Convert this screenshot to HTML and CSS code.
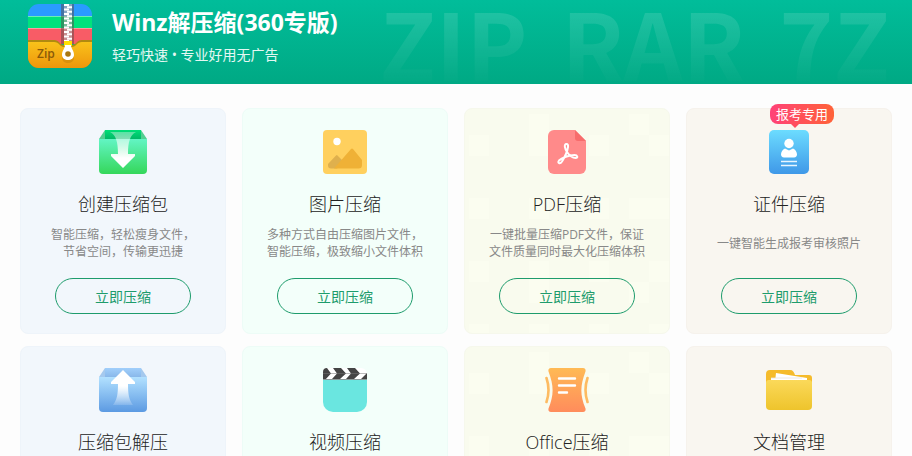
FILE: index.html
```html
<!DOCTYPE html>
<html lang="zh-CN">

<head>
    <meta charset="UTF-8">
    <meta name="viewport" content="width=device-width, initial-scale=1.0">
    <title>Winz解压缩(360专版)</title>
    <link rel="stylesheet" href="styles.css">
</head>

<body>
    <header class="banner">
        <svg class="logo" viewBox="0 0 64 64" aria-hidden="true">
            <defs>
                <linearGradient id="pocket" x1="0" y1="0" x2="0" y2="1">
                    <stop offset="0" stop-color="#f9c21a" />
                    <stop offset="1" stop-color="#ee960c" />
                </linearGradient>
                <clipPath id="logo-clip">
                    <rect width="64" height="64" rx="11" />
                </clipPath>
            </defs>
            <g clip-path="url(#logo-clip)">
                <rect width="64" height="12" fill="#2a9bff" />
                <rect y="12" width="64" height="12" fill="#00e27c" />
                <rect y="12" width="64" height="1" fill="#6aefb4" />
                <rect y="24" width="64" height="16" fill="#f85c66" />
                <rect y="24" width="64" height="1" fill="#ff9aa0" />
                <rect x="33" width="13" height="40" fill="#5a4a48" opacity=".5" />
                <path d="M0 36h26c5 0 6 5 10 5h8c4 0 5-5 10-5h10v28H0z" fill="#b08a10" />
                <path d="M0 38h26c5 0 6 5 10 5h8c4 0 5-5 10-5h10v26H0z" fill="url(#pocket)" />
                <path d="M40 0v38" stroke="#fff" stroke-width="8" stroke-opacity=".35" />
                <path d="M38.500 0v38" stroke="#fff" stroke-width="5" stroke-dasharray="2 2.500" />
                <path d="M41.500 2.200v36" stroke="#fff" stroke-width="5" stroke-dasharray="2 2.500" />
                <rect x="36" y="37" width="8" height="5" fill="#ffe000" />
                <path d="M37 42h6c0 4 3 5 3 10 0 3-3 5-6 5s-6-2-6-5c0-5 3-6 3-10z" fill="#a76b05" opacity=".3" transform="translate(0 2)" />
                <path d="M37 41h6c0 4 3 5 3 10 0 3-3 5-6 5s-6-2-6-5c0-5 3-6 3-10z" fill="#fff" />
                <circle cx="40" cy="50" r="2.800" fill="#a97712" />
            </g>
            <text class="logo-text" x="9" y="54">Zip</text>
        </svg>
        <div class="banner-text">
            <h1 class="app-name">Winz解压缩(360专版)</h1>
            <p class="slogan">轻巧快速 • 专业好用无广告</p>
        </div>
        <div class="formats" aria-hidden="true">
            <span>ZIP</span>
            <span>RAR</span>
            <span>7Z</span>
        </div>
    </header>

    <main class="tools">
        <section class="card card-blue">
            <svg class="icon" width="48" height="44" viewBox="0 0 48 44" aria-hidden="true">
                <defs>
                    <linearGradient id="box-green" x1="0" y1="0" x2="0" y2="1">
                        <stop offset="0" stop-color="#62f5c4" />
                        <stop offset="1" stop-color="#35d75a" />
                    </linearGradient>
                    <linearGradient id="lid-green" x1="0" y1="0" x2="0" y2="1">
                        <stop offset="0" stop-color="#00df78" />
                        <stop offset="1" stop-color="#00b464" />
                    </linearGradient>
                    <linearGradient id="arrow-down" gradientUnits="userSpaceOnUse" x1="0" y1="2" x2="0" y2="28">
                        <stop offset="0" stop-color="#fff" stop-opacity=".35" />
                        <stop offset="1" stop-color="#fff" />
                    </linearGradient>
                </defs>
                <path d="M6 0h36v10H6z" fill="url(#lid-green)" />
                <path d="M6 0v9H0zM42 0v9h6z" fill="#51cf91" />
                <path d="M0 9h48v31a4 4 0 0 1-4 4H4a4 4 0 0 1-4-4z" fill="url(#box-green)" />
                <path d="M11 2h26c-6 3-8 10-8 22h7v2L24 38 12 26v-2h7c0-12-2-19-8-22z" fill="url(#arrow-down)" />
            </svg>
            <h2 class="name">创建压缩包</h2>
            <p class="desc">智能压缩，轻松瘦身文件，<br>节省空间，传输更迅捷</p>
            <button type="button" class="start">立即压缩</button>
        </section>

        <section class="card card-mint">
            <svg class="icon" width="44" height="44" viewBox="0 0 44 44" aria-hidden="true">
                <rect width="44" height="44" rx="4" fill="#ffd05e" />
                <circle cx="14" cy="11.500" r="3.700" fill="#fff" />
                <path d="M5 34l8-8.500a1 1 0 0 1 1.500 0L22 33l-8 5.500H8a3 3 0 0 1-3-3z" fill="#dfb04d" />
                <path d="M11 38.500l17-19.500a1.300 1.300 0 0 1 2 0l9 11v5a3.500 3.500 0 0 1-3.500 3.500z" fill="#efb136" />
            </svg>
            <h2 class="name">图片压缩</h2>
            <p class="desc">多种方式自由压缩图片文件，<br>智能压缩，极致缩小文件体积</p>
            <button type="button" class="start">立即压缩</button>
        </section>

        <section class="card card-lime">
            <svg class="icon" width="38" height="44" viewBox="0 0 38 44" aria-hidden="true">
                <path d="M6 0h21l11 11v27a6 6 0 0 1-6 6H6a6 6 0 0 1-6-6V6a6 6 0 0 1 6-6z" fill="#ff8a8a" />
                <path d="M27 0l11 11h-8a3 3 0 0 1-3-3z" fill="#f76c6c" />
                <path d="M18.500 14c-3 0-1.500 5 .5 8s5.500 6 8.500 6 2-3-1-3c-5 0-13 3-15.500 5.500-2 2.500 1 4 3 1 2.500-4 5.500-11 6-14.500.3-2-.3-3-1.500-3z" fill="none" stroke="#fff" stroke-width="2" stroke-linejoin="round" />
            </svg>
            <h2 class="name">PDF压缩</h2>
            <p class="desc">一键批量压缩PDF文件，保证<br>文件质量同时最大化压缩体积</p>
            <button type="button" class="start">立即压缩</button>
        </section>

        <section class="card card-sand">
            <span class="badge">报考专用</span>
            <svg class="icon" width="40" height="44" viewBox="0 0 40 44" aria-hidden="true">
                <defs>
                    <linearGradient id="id-card" x1="0" y1="0" x2="0" y2="1">
                        <stop offset="0" stop-color="#6cdcff" />
                        <stop offset="1" stop-color="#3f98e8" />
                    </linearGradient>
                </defs>
                <rect width="40" height="44" rx="5" fill="url(#id-card)" />
                <circle cx="20" cy="13.500" r="4.700" fill="#fff" />
                <path d="M16 18.500l4 2 4-2c2.500 1 4 3.500 4 6 0 1.500-1 3-3 3H15c-2 0-3-1.500-3-3 0-2.500 1.500-5 4-6z" fill="#fff" />
                <path d="M12 31.500h16M12 35.500h16" stroke="#e8f6ff" stroke-width="1.300" />
            </svg>
            <h2 class="name">证件压缩</h2>
            <p class="desc">一键智能生成报考审核照片</p>
            <button type="button" class="start">立即压缩</button>
        </section>

        <section class="card card-blue">
            <svg class="icon" width="48" height="44" viewBox="0 0 48 44" aria-hidden="true">
                <defs>
                    <linearGradient id="box-blue" x1="0" y1="0" x2="0" y2="1">
                        <stop offset="0" stop-color="#b2e1ff" />
                        <stop offset="1" stop-color="#5c9ae2" />
                    </linearGradient>
                    <linearGradient id="lid-blue" x1="0" y1="0" x2="0" y2="1">
                        <stop offset="0" stop-color="#a1cffb" />
                        <stop offset="1" stop-color="#86b5e8" />
                    </linearGradient>
                    <linearGradient id="arrow-up" gradientUnits="userSpaceOnUse" x1="0" y1="18" x2="0" y2="37">
                        <stop offset="0" stop-color="#fff" />
                        <stop offset="1" stop-color="#fff" stop-opacity=".15" />
                    </linearGradient>
                </defs>
                <path d="M6 0h36v10H6z" fill="url(#lid-blue)" />
                <path d="M6 0v9H0zM42 0v9h6z" fill="#a5c9ee" />
                <path d="M0 9h48v31a4 4 0 0 1-4 4H4a4 4 0 0 1-4-4z" fill="url(#box-blue)" />
                <path d="M24 2l12 12v2h-7c0 10 1 16 5 21H14c4-5 5-11 5-21h-7v-2z" fill="url(#arrow-up)" />
            </svg>
            <h2 class="name">压缩包解压</h2>
        </section>

        <section class="card card-mint">
            <svg class="icon" width="44" height="44" viewBox="0 0 44 44" aria-hidden="true">
                <defs>
                    <clipPath id="clapper">
                        <path d="M4 0h34a6 6 0 0 1 6 6v6H0V4a4 4 0 0 1 4-4z" />
                    </clipPath>
                </defs>
                <g clip-path="url(#clapper)">
                    <rect width="44" height="12" fill="#fff" />
                    <path d="M-1 0h5l4 5.500L2 12h-3zM10 0h8l5 5.500-6 5.500H9l5-5.500zM24 0h8l5 5.500-6 5.500h-8l5-5.500zM44 5v7h-7z" fill="#444" />
                    <path d="M0 5.500h44" stroke="#777" stroke-width=".5" />
                </g>
                <path d="M0 12h44v22a10 10 0 0 1-10 10H10A10 10 0 0 1 0 34z" fill="#6ae6e0" />
                <path d="M0 11.500h44" stroke="#8b9a9a" />
            </svg>
            <h2 class="name">视频压缩</h2>
        </section>

        <section class="card card-lime">
            <svg class="icon" width="44" height="44" viewBox="0 0 44 44" aria-hidden="true">
                <defs>
                    <linearGradient id="office" x1="0" y1="0" x2="0" y2="1">
                        <stop offset="0" stop-color="#ffba55" />
                        <stop offset="1" stop-color="#ff8c5c" />
                    </linearGradient>
                </defs>
                <path d="M6 0h32c2 0 3 1.500 2.500 3.500C35 18 35 27 40.500 40.500 41 42.500 40 44 38 44H6c-2 0-3-1.500-2.500-3.500C9 27 9 18 3.500 3.500 3 1.500 4 0 6 0z" fill="url(#office)" />
                <path d="M1.500 10q4 12 0 24M42.500 10q-4 12 0 24" fill="none" stroke="#fdbb62" stroke-width="2.600" stroke-linecap="round" />
                <path d="M14 10.500h16M14 17.500h16M14 24.500h8" stroke="#fff" stroke-width="2.400" stroke-linecap="round" />
            </svg>
            <h2 class="name">Office压缩</h2>
        </section>

        <section class="card card-sand">
            <svg class="icon" width="46" height="44" viewBox="0 0 46 44" aria-hidden="true">
                <defs>
                    <linearGradient id="folder" x1="0" y1="0" x2="0" y2="1">
                        <stop offset="0" stop-color="#fbd95a" />
                        <stop offset="1" stop-color="#eec42c" />
                    </linearGradient>
                </defs>
                <path d="M4 2h20c3 0 4 2 5 5h14a3 3 0 0 1 3 3v14H0V6a4 4 0 0 1 4-4z" fill="#f5bb2b" />
                <path d="M10 5l31 5v4H9z" fill="#fff" />
                <path d="M5 10h36v5H5z" fill="#fff" />
                <path d="M5 10h31" stroke="#e6e2dc" stroke-width=".8" />
                <path d="M3 12h40a3 3 0 0 1 3 3v23a4 4 0 0 1-4 4H4a4 4 0 0 1-4-4V15a3 3 0 0 1 3-3z" fill="url(#folder)" />
            </svg>
            <h2 class="name">文档管理</h2>
        </section>
    </main>
</body>

</html>
```

FILE: styles.css
```css
* {
    box-sizing: border-box;
}

body {
    margin: 0;
    height: 100vh;
    overflow: hidden;
    background-color: #fdfdfd;
    font-family: "Open Sans", "Noto Sans CJK SC", sans-serif;
}

h1,
h2,
p {
    margin: 0;
    font-weight: normal;
}

.banner {
    position: relative;
    display: flex;
    gap: 20px;
    padding: 4px 28px 16px;
    background: linear-gradient(#01bd9a, #00a984);
    color: #fff;
}

.logo {
    width: 64px;
    height: 64px;
}

.logo-text {
    font-size: 12px;
    font-weight: 600;
    fill: #8a5a08;
}

.app-name {
    font-size: 23px;
    font-weight: bold;
    line-height: 36px;
}

.slogan {
    margin-top: 5px;
    font-size: 14px;
    line-height: 20px;
    color: #e4f8f3;
}

/* big faded words behind the banner */
.formats {
    position: absolute;
    top: 0;
    right: 22px;
    display: flex;
    gap: 34px;
    font-family: "Noto Sans CJK SC", sans-serif;
    font-size: 92px;
    font-weight: bold;
    line-height: 82px;
    color: transparent;
    background: linear-gradient(rgba(255, 255, 255, 0.14), rgba(255, 255, 255, 0.01));
    -webkit-background-clip: text;
    background-clip: text;
}

.tools {
    display: grid;
    grid-template-columns: repeat(4, 1fr);
    gap: 12px 16px;
    padding: 24px 20px;
}

.card {
    position: relative;
    display: flex;
    flex-direction: column;
    align-items: center;
    min-height: 226px;
    padding: 21px 12px 19px;
    border: 1px solid;
    border-radius: 8px;
    text-align: center;
}

.card-blue {
    background-color: #f2f7fc;
    border-color: #eef4fa;
}

.card-mint {
    background-color: #f3fffa;
    border-color: #edfcf7;
}

/* faint squares */
.card-lime {
    background-color: #f9fbee;
    border-color: #f6f8ec;
    background-image:
        conic-gradient(at 20px 21px, transparent 75%, #fbfdf0 0),
        conic-gradient(at 20px 21px, transparent 75%, #fbfdf0 0);
    background-size: 60px 63px, 100px 84px;
    background-position: 4px 26px, 64px 5px;
}

.card-sand {
    background-color: #f9f6f0;
    border-color: #f6f2ec;
}

.icon {
    display: block;
    flex: none;
}

.name {
    margin-top: 18px;
    font-size: 18px;
    font-weight: 300;
    line-height: 24px;
    color: #222;
}

.desc {
    display: flow-root;
    min-height: 34px;
    margin-top: 10px;
    font-size: 12px;
    line-height: 17px;
    color: #888;
    align-content: center;
}

.start {
    width: 136px;
    height: 36px;
    margin-top: 18px;
    padding: 0;
    border: 1px solid #1e9c6c;
    border-radius: 18px;
    background: transparent;
    font-family: inherit;
    font-size: 14px;
    color: #1e9c6c;
    cursor: pointer;
}

.badge {
    position: absolute;
    top: -5px;
    left: 83px;
    width: 64px;
    height: 20px;
    border-radius: 8px;
    background: linear-gradient(90deg, #ff4278, #ff6238);
    font-size: 13px;
    line-height: 20px;
    color: #fff;
}

.badge::after {
    content: "";
    position: absolute;
    top: 20px;
    left: 21px;
    border: 4px solid transparent;
    border-top-color: #ff4d60;
    border-bottom: 0;
}
```
